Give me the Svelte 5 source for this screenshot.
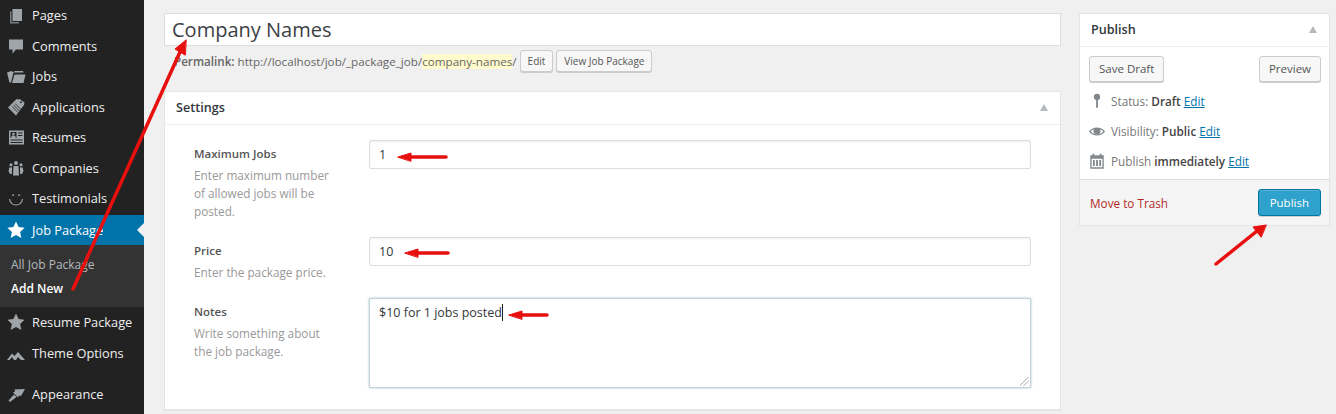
<script>
  const topMenu = [
    { label: 'Pages', icon: 'pages' },
    { label: 'Comments', icon: 'comments' },
    { label: 'Jobs', icon: 'folder' },
    { label: 'Applications', icon: 'tag' },
    { label: 'Resumes', icon: 'resume' },
    { label: 'Companies', icon: 'people' },
    { label: 'Testimonials', icon: 'smile' }
  ];
  const bottomMenu = [
    { label: 'Resume Package', icon: 'star' },
    { label: 'Theme Options', icon: 'peaks' }
  ];
</script>

{#snippet icon(name)}
  <svg class="mi" viewBox="0 0 20 20" width="20" height="20" aria-hidden="true">
    {#if name === 'pages'}
      <path d="M6.5 4H16v12H6.5z" />
      <path d="M4 6.5h1.500V17H13v1.500H4z" opacity="0.7" />
    {:else if name === 'comments'}
      <path d="M3 3.500h14v10H10L6.500 17.500v-4H3z" />
    {:else if name === 'folder'}
      <path d="M1 6.500l4.500-1.500 1.500 1h1l.5-1H17l.5 1.500H7.500L5 16.500H3.500z" />
      <path d="M8.500 8.500H19.500L17.500 17H6z" />
    {:else if name === 'tag'}
      <path d="M10.500 2l2 .5 1-.5 5 3.500-.5 2.500L10 18.500 2 10.500z" />
      <path d="M9 6.500l6 6M7.500 8l6 6M6 9.500l6 6" stroke="#222" stroke-width="0.800" fill="none" />
      <circle cx="15" cy="5.200" r="0.900" fill="#222" />
    {:else if name === 'resume'}
      <path fill-rule="evenodd" d="M3 3.500h15v14H3z M4.500 5v6h6V5z M12 5.500v1h4.500v-1z M12 8v1h4.500V8z M4.500 12.500v1h12v-1z M4.500 15v1h12v-1z" />
      <circle cx="7.500" cy="7" r="1.300" />
      <path d="M5.200 11c0-1.800 1-2.400 2.300-2.400s2.300.6 2.300 2.400z" />
    {:else if name === 'people'}
      <circle cx="10" cy="5" r="2" /><circle cx="5" cy="6.800" r="1.600" /><circle cx="15" cy="6.800" r="1.600" />
      <path d="M7.500 8h5l.5 9.500H7z M3.300 9.500h2.800L5.800 16H4l-1.500-3z M13.900 9.500h2.800l.8 3.500-1.500 3h-1.800z" />
    {:else if name === 'smile'}
      <path d="M3.500 11C5 19 15 19 16.500 11" fill="none" stroke="#a0a5aa" stroke-width="1.200" />
      <rect x="6" y="6.500" width="2.200" height="1.200" /><rect x="12" y="6.500" width="2.200" height="1.200" />
    {:else if name === 'star'}
      <path d="M10 1.500l2.600 5.600 6 .7-4.500 4.100 1.300 6L10 14.900l-5.400 3 1.300-6L1.400 7.800l6-.7z" />
    {:else if name === 'peaks'}
      <path d="M1 17L6 10.500 8.500 13 12 9l7 8h-4L12 14l-2 3H8l-2-3-2.500 3z" />
    {:else if name === 'brush'}
      <path d="M19 5l-4 7-2-.5-1 2L7 8.500l2-1-.5-2z" />
      <path d="M8 10.500l2.500 2.500L4 18l-1.500-1.500z" />
    {/if}
  </svg>
{/snippet}

<div class="page">
  <aside class="sidebar">
    <ul class="menu">
      {#each topMenu as item}
        <li class="item">{@render icon(item.icon)}<span>{item.label}</span></li>
      {/each}
      <li class="item current">
        {@render icon('star')}<span>Job Package</span>
      </li>
      <li class="submenu">
        <div class="sub">All Job Package</div>
        <div class="sub active">Add New</div>
      </li>
      {#each bottomMenu as item}
        <li class="item">{@render icon(item.icon)}<span>{item.label}</span></li>
      {/each}
      <li class="item spaced">{@render icon('brush')}<span>Appearance</span></li>
    </ul>
  </aside>

  <main class="content">
    <div class="editor">
      <div class="title">Company Names</div>
      <div class="permalink">
        <strong>Permalink:</strong>
        <span class="url">http://localhost/job/_package_job/<span class="slug">company-names</span>/</span>
        <button class="btn small">Edit</button>
        <button class="btn small">View Job Package</button>
      </div>

      <section class="box settings">
        <header class="box-head">
          <h2>Settings</h2>
          <span class="caret"></span>
        </header>
        <div class="settings-body">
          <div class="row first">
            <div class="desc">
              <label for="max-jobs">Maximum Jobs</label>
              <p>Enter maximum number of allowed jobs will be posted.</p>
            </div>
            <div class="field" id="max-jobs">1</div>
          </div>
          <div class="row second">
            <div class="desc">
              <label for="price">Price</label>
              <p>Enter the package price.</p>
            </div>
            <div class="field" id="price">10</div>
          </div>
          <div class="row">
            <div class="desc">
              <label for="notes">Notes</label>
              <p>Write something about the job package.</p>
            </div>
            <div class="field area" id="notes">
              <span>$10 for 1 jobs posted</span><i class="cursor"></i>
              <svg class="grip" viewBox="0 0 9 9" width="9" height="9" aria-hidden="true">
                <path d="M0 8.500L8.500 0M4 8.500L8.500 4" stroke="#666" stroke-width="1" stroke-dasharray="1.500 1" fill="none" />
              </svg>
            </div>
          </div>
        </div>
      </section>
    </div>

    <aside class="side">
      <section class="box publish">
        <header class="box-head">
          <h2>Publish</h2>
          <span class="caret"></span>
        </header>
        <div class="actions">
          <button class="btn">Save Draft</button>
          <button class="btn">Preview</button>
        </div>
        <div class="meta">
          <svg viewBox="0 0 20 20" width="20" height="20" aria-hidden="true"><circle cx="10" cy="5.500" r="3.500" /><rect x="9" y="8" width="2" height="9.500" /></svg>
          <span>Status: <b>Draft</b> <a href="#status">Edit</a></span>
        </div>
        <div class="meta">
          <svg viewBox="0 0 20 20" width="20" height="20" aria-hidden="true"><path fill-rule="evenodd" d="M1 10.500C5.500 4.500 14.500 4.500 19 10.500 14.500 16.500 5.500 16.500 1 10.500z M3 10.500C6.500 14.500 13.500 14.500 17 10.500 15.500 9 14.500 8.300 13.500 8a4 4 0 1 1-7 0C5.500 8.300 4.500 9 3 10.500z" /><circle cx="10" cy="9.500" r="2.400" /></svg>
          <span>Visibility: <b>Public</b> <a href="#visibility">Edit</a></span>
        </div>
        <div class="meta">
          <svg viewBox="0 0 20 20" width="20" height="20" aria-hidden="true"><path fill-rule="evenodd" d="M2.500 3.500h2.500V2h2v1.500h6V2h2v1.500h2.500V18.500H2.500z M4 7.500V17h12V7.500z" /><path d="M5.500 9h2v6.500h-2z M9 9h2v6.500H9z M12.500 9h2v6.500h-2z" /></svg>
          <span>Publish <b>immediately</b> <a href="#schedule">Edit</a></span>
        </div>
        <footer class="major">
          <a class="trash" href="#trash">Move to Trash</a>
          <button class="btn primary">Publish</button>
        </footer>
      </section>
    </aside>
  </main>

  <!-- red arrows drawn on top of the screenshot -->
  <svg class="marks" viewBox="0 0 1336 414" width="1336" height="414" aria-hidden="true">
    <g fill="#e80f0f" stroke="#e80f0f" stroke-linecap="round">
      <path d="M73 289L180 52" stroke-width="3.500" fill="none" />
      <path d="M186 40l-11 9 10 6z" stroke-linejoin="round" />
      <path d="M410 157h36" stroke-width="3.500" fill="none" />
      <path d="M398 157l13-4v8z" />
      <path d="M417 253h31" stroke-width="3.500" fill="none" />
      <path d="M405 253l13-4v8z" />
      <path d="M521 315h26" stroke-width="3.500" fill="none" />
      <path d="M509 315l13-4v8z" />
      <path d="M1216 264l41-33" stroke-width="3.500" fill="none" />
      <path d="M1266 225l-13 2 8 10z" />
    </g>
  </svg>
</div>

<style>
  :global(body) {
    margin: 0;
    background: #f0f0f0;
  }
  .page {
    position: relative;
    display: flex;
    width: 1336px;
    height: 414px;
    overflow: hidden;
    font-family: "Open Sans", sans-serif;
    font-size: 12px;
    color: #444;
    background: #f0f0f0;
  }
  .sidebar {
    width: 144px;
    flex: none;
    background: #222;
  }
  .menu {
    list-style: none;
    margin: 0;
    padding: 0;
  }
  .item {
    position: relative;
    display: flex;
    align-items: center;
    height: 30.5px;
    padding-left: 6px;
    gap: 6px;
    font-size: 12.8px;
    color: #eee;
    white-space: nowrap;
  }
  .mi {
    fill: #a0a5aa;
    flex: none;
  }
  .item.current {
    height: 30px;
    margin-top: 1.5px;
    background: #0073aa;
    color: #fff;
  }
  .item.current .mi {
    fill: #fff;
  }
  .item.current::after {
    content: "";
    position: absolute;
    right: 0;
    top: 8px;
    border: 7px solid transparent;
    border-right-color: #f0f0f0;
    border-left-width: 0;
  }
  .item.spaced {
    margin-top: 11px;
  }
  .submenu {
    height: 62px;
    box-sizing: border-box;
    padding: 8px 0 0 11px;
    background: #333;
  }
  .sub {
    line-height: 24px;
    height: 24px;
    font-size: 12px;
    color: #b4b9be;
  }
  .sub.active {
    color: #fff;
    font-weight: 600;
  }
  .content {
    flex: 1;
    display: flex;
    gap: 18px;
    padding: 13px 6px 0 20px;
    min-width: 0;
  }
  .editor {
    width: 897px;
    flex: none;
  }
  .title {
    box-sizing: border-box;
    height: 33px;
    padding-left: 7px;
    font-size: 20px;
    line-height: 32px;
    color: #3c4146;
    background: #fff;
    border: 1px solid #ddd;
  }
  .permalink {
    display: flex;
    align-items: center;
    gap: 3px;
    height: 24px;
    margin-top: 3px;
    padding-left: 10px;
    font-size: 11.65px;
    color: #666;
  }
  .permalink strong {
    font-weight: 600;
  }
  .slug {
    background: #fffbcc;
  }
  .btn {
    box-sizing: border-box;
    height: 26px;
    padding: 0 9px;
    font: 11.5px/24px "Open Sans", sans-serif;
    color: #555;
    background: #f7f7f7;
    border: 1px solid #ccc;
    border-radius: 3px;
    box-shadow: 0 1px 0 #ccc;
  }
  .btn.small {
    height: 22px;
    padding: 0 7px;
    font-size: 10px;
    line-height: 20px;
  }
  .box {
    box-sizing: border-box;
    background: #fff;
    border: 1px solid #e5e5e5;
    box-shadow: 0 1px 1px rgba(0, 0, 0, 0.04);
  }
  .settings {
    margin-top: 18px;
    height: 319px;
  }
  .box-head {
    box-sizing: border-box;
    display: flex;
    align-items: center;
    justify-content: space-between;
    height: 33px;
    padding: 0 12px 2px 11px;
    border-bottom: 1px solid #eee;
  }
  .box-head h2 {
    margin: 0;
    font-size: 12.6px;
    font-weight: 600;
    color: #32373c;
  }
  .caret {
    width: 0;
    height: 0;
    border: 4.5px solid transparent;
    border-top-width: 0;
    border-bottom: 7px solid #b4b9be;
  }
  .settings-body {
    padding: 15px 29px 0 29px;
  }
  .row {
    display: flex;
  }
  .row.first {
    height: 97px;
  }
  .row.second {
    height: 61px;
  }
  .desc {
    width: 175px;
    flex: none;
    padding: 5px 35px 0 0;
    box-sizing: border-box;
  }
  .desc label {
    display: block;
    font-size: 11.5px;
    font-weight: 600;
    line-height: 18px;
    color: #555;
  }
  .desc p {
    margin: 3px 0 0;
    font-size: 11.75px;
    line-height: 18px;
    color: #999;
  }
  .field {
    flex: 1;
    box-sizing: border-box;
    height: 29px;
    padding-left: 9px;
    font-size: 12.5px;
    line-height: 27px;
    color: #32373c;
    background: #fff;
    border: 1px solid #ddd;
    border-radius: 2px;
    box-shadow: inset 0 1px 2px rgba(0, 0, 0, 0.07);
  }
  .field.area {
    position: relative;
    height: 90px;
    border-color: #c3d3d8;
    box-shadow: 0 0 2px rgba(30, 100, 120, 0.5);
  }
  .cursor {
    display: inline-block;
    width: 1px;
    height: 17px;
    vertical-align: -4px;
    background: #222;
  }
  .grip {
    position: absolute;
    right: 1px;
    bottom: 1px;
  }
  .side {
    width: 251px;
    flex: none;
  }
  .publish {
    height: 212px;
  }
  .actions {
    display: flex;
    justify-content: space-between;
    box-sizing: border-box;
    height: 39px;
    padding: 9px 8px 0 9px;
  }
  .meta {
    display: flex;
    align-items: center;
    gap: 5px;
    height: 30px;
    padding-left: 8px;
    font-size: 11.75px;
    color: #777;
  }
  .meta svg {
    fill: #82878c;
    flex: none;
    width: 18px;
    height: 18px;
  }
  .meta b {
    font-weight: 600;
    color: #444;
  }
  .meta a {
    color: #0073aa;
  }
  .major {
    display: flex;
    align-items: center;
    justify-content: space-between;
    box-sizing: border-box;
    height: 46px;
    margin-top: 3px;
    padding: 0 8px 0 10px;
    background: #f5f5f5;
    border-top: 1px solid #ddd;
  }
  .trash {
    font-size: 11.75px;
    color: #a00;
    text-decoration: none;
    opacity: 0.85;
  }
  .btn.primary {
    height: 27px;
    padding: 0 11px;
    color: #fff;
    background: #2ea2cc;
    border-color: #0074a2;
    box-shadow: inset 0 1px 0 rgba(120, 200, 230, 0.5), 0 1px 0 rgba(0, 0, 0, 0.15);
  }
  .marks {
    position: absolute;
    left: 0;
    top: 0;
    pointer-events: none;
  }
</style>
